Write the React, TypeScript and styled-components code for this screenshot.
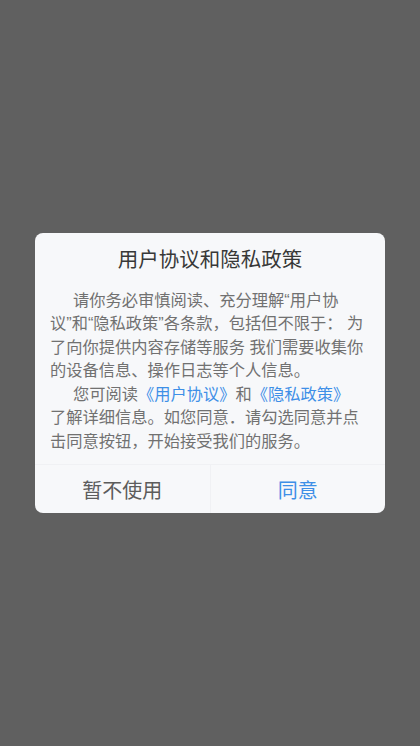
import React from 'react';
import styled, { createGlobalStyle } from 'styled-components';

const Colors = {
  overlay: '#606060',
  dialog: '#f7f8fa',
  title: '#383838',
  text: '#717171',
  link: '#3e8fe7',
  cancel: '#5c5c5c',
  divider: '#f0f1f4',
};

const GlobalStyle = createGlobalStyle`
  html, body {
    margin: 0;
    padding: 0;
  }
  body {
    font-family: "Liberation Sans", "Noto Sans CJK SC", sans-serif;
  }
`;

const App: React.FC = () => {
  return (
    <>
      <GlobalStyle />
      <Overlay>
        <Dialog>
          <DialogTitle>用户协议和隐私政策</DialogTitle>
          <DialogBody>
            <Paragraph>
              请你务必审慎阅读、充分理解“用户协
              <br />
              议”和“隐私政策”各条款，包括但不限于： 为
              <br />
              了向你提供内容存储等服务 我们需要收集你
              <br />
              的设备信息、操作日志等个人信息。
            </Paragraph>
            <Paragraph>
              您可阅读<Link>《用户协议》</Link>和<Link>《隐私政策》</Link>
              <br />
              了解详细信息。如您同意．请勾选同意并点
              <br />
              击同意按钮，开始接受我们的服务。
            </Paragraph>
          </DialogBody>
          <ButtonRow>
            <DialogButton>暂不使用</DialogButton>
            <DialogButton primary>同意</DialogButton>
          </ButtonRow>
        </Dialog>
      </Overlay>
    </>
  );
};

export default App;

const Overlay = styled.div`
  width: 100%;
  min-height: 100vh;
  background: ${Colors.overlay};
  display: flex;
  justify-content: center;
  align-items: center;
`;

const Dialog = styled.div`
  width: 350px;
  background: ${Colors.dialog};
  border-radius: 8px;
  display: flex;
  flex-direction: column;
  overflow: hidden;
`;

const DialogTitle = styled.h1`
  margin: 0;
  padding-top: 13px;
  font-size: 20.5px;
  line-height: 28px;
  font-weight: normal;
  text-align: center;
  color: ${Colors.title};
`;

const DialogBody = styled.div`
  padding: 15px 15px 11px 15px;
`;

const Paragraph = styled.p`
  margin: 0;
  font-size: 16.25px;
  line-height: 23.5px;
  text-indent: 23px;
  white-space: nowrap;
  color: ${Colors.text};
`;

const Link = styled.span`
  color: ${Colors.link};
`;

const ButtonRow = styled.div`
  display: flex;
  height: 48px;
  border-top: 1px solid ${Colors.divider};
`;

const DialogButton = styled.button<{ primary?: boolean }>`
  flex: 1;
  border: none;
  background: transparent;
  padding: 0;
  font-family: inherit;
  font-size: 20px;
  color: ${({ primary }) => (primary ? Colors.link : Colors.cancel)};
  border-left: ${({ primary }) => (primary ? `1px solid ${Colors.divider}` : 'none')};
  cursor: pointer;
`;
